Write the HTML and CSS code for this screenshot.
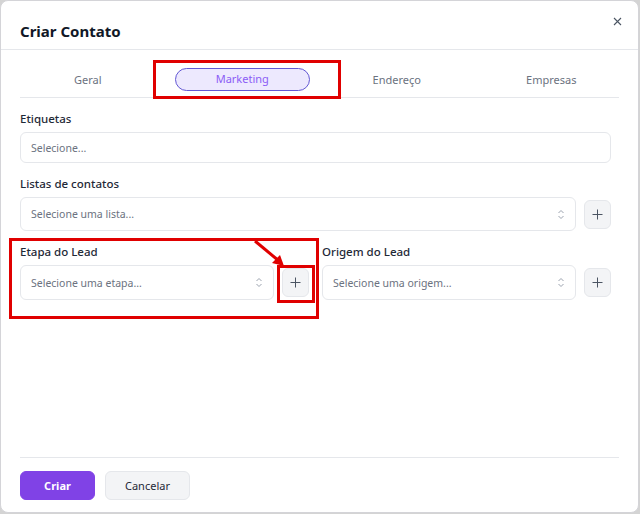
FILE: index.html
```html
<!DOCTYPE html>
<html lang="pt-br">
<head>
    <meta charset="UTF-8">
    <meta name="viewport" content="width=device-width, initial-scale=1.0">
    <title>Criar Contato</title>
    <link rel="stylesheet" href="styles.css">
</head>
<body>

    <div class="modal">
        <!-- Cabeçalho -->
        <header class="modal-header">
            <h2>Criar Contato</h2>
            <button class="close-btn" aria-label="Fechar">
                <svg width="9" height="9" viewBox="0 0 9 9"><path d="M1 1L8 8M8 1L1 8" stroke="#4b5563" stroke-width="1.1" fill="none"/></svg>
            </button>
        </header>

        <!-- Abas -->
        <nav class="tabs">
            <span class="tab">Geral</span>
            <span class="tab active">Marketing</span>
            <span class="tab">Endereço</span>
            <span class="tab">Empresas</span>
        </nav>

        <!-- Campos de marketing -->
        <main class="modal-body">
            <div class="field">
                <label>Etiquetas</label>
                <div class="input small">Selecione...</div>
            </div>

            <div class="field">
                <label>Listas de contatos</label>
                <div class="select-row">
                    <div class="input select">Selecione uma lista... <span class="chevrons"></span></div>
                    <button class="add-btn"></button>
                </div>
            </div>

            <div class="field-cols">
                <div class="field">
                    <label>Etapa do Lead</label>
                    <div class="select-row">
                        <div class="input select tall">Selecione uma etapa... <span class="chevrons"></span></div>
                        <button class="add-btn"></button>
                    </div>
                </div>
                <div class="field">
                    <label>Origem do Lead</label>
                    <div class="select-row">
                        <div class="input select tall">Selecione uma origem... <span class="chevrons"></span></div>
                        <button class="add-btn"></button>
                    </div>
                </div>
            </div>
        </main>

        <!-- Rodapé -->
        <footer class="modal-footer">
            <button class="btn primary">Criar</button>
            <button class="btn">Cancelar</button>
        </footer>

        <!-- Marcações em vermelho -->
        <div class="mark mark-tab"></div>
        <div class="mark mark-lead"></div>
        <div class="mark mark-add"></div>
        <svg class="mark-arrow" width="40" height="36" viewBox="0 0 40 36">
            <path d="M2 2L26 22" stroke="#e00000" stroke-width="3" fill="none"/>
            <path d="M31 27L19 24L27 16Z" fill="#e00000"/>
        </svg>
    </div>

    <script>
        // Ícones repetidos: setas do select e botão de adicionar
        const chevronSvg = '<svg width="8" height="11" viewBox="0 0 8 11"><path d="M1.5 4L4 1.5L6.5 4M1.5 7L4 9.5L6.5 7" stroke="#9ca3af" stroke-width="1" fill="none"/></svg>';
        const plusSvg = '<svg width="11" height="11" viewBox="0 0 11 11"><path d="M5.5 0.5V10.5M0.5 5.5H10.5" stroke="#4b5563" stroke-width="1" fill="none"/></svg>';

        document.querySelectorAll('.chevrons').forEach(el => el.innerHTML = chevronSvg);
        document.querySelectorAll('.add-btn').forEach(el => el.innerHTML = plusSvg);
    </script>

</body>
</html>
```

FILE: styles.css
```css
/* Fundo e janela */
body {
    margin: 0;
    background-color: #d4d4d4;
    font-family: "Noto Sans", Arial, sans-serif;
    color: #1f2937;
}

.modal {
    position: relative;
    width: 637px;
    height: 511px;
    background-color: #fff;
    border: 1px solid #d4d4d8;
    border-radius: 8px;
    display: flex;
    flex-direction: column;
}

/* Cabeçalho */
.modal-header {
    display: flex;
    justify-content: space-between;
    align-items: flex-start;
    padding: 21px 16px 8px 19px;
    border-bottom: 1px solid #e5e7eb;
}

.modal-header h2 {
    margin: 0;
    font-size: 15px;
    line-height: 19px;
    font-weight: 700;
    color: #111827;
}

.close-btn {
    background: none;
    border: none;
    padding: 0;
    margin-top: -8px;
    width: 9px;
    height: 12px;
    cursor: pointer;
}

/* Abas */
.tabs {
    display: grid;
    grid-template-columns: repeat(4, 1fr);
    gap: 19px;
    margin: 0 19px;
    padding: 18px 0 6px;
    border-bottom: 1px solid #e5e7eb;
}

.tab {
    height: 23px;
    line-height: 23px;
    text-align: center;
    font-size: 11px;
    color: #6b7280;
    box-sizing: border-box;
}

.tab.active {
    background-color: #ede9fe;
    border: 1.5px solid #6358d4;
    border-radius: 12px;
    line-height: 20px;
    color: #8b5cf6;
}

/* Corpo do formulário */
.modal-body {
    flex: 1;
    padding: 14px 27px 0 19px;
}

.field {
    margin-bottom: 14px;
}

.field label {
    display: block;
    font-size: 11.5px;
    line-height: 14px;
    font-weight: 500;
    margin-bottom: 6px;
}

.input {
    box-sizing: border-box;
    height: 34px;
    padding: 0 10px;
    border: 1px solid #e5e7eb;
    border-radius: 6px;
    font-size: 10.5px;
    color: #6b7280;
    display: flex;
    align-items: center;
}

.input.small {
    height: 31px;
}

.input.tall {
    height: 35px;
}

.select {
    flex: 1;
    justify-content: space-between;
}

.chevrons {
    display: flex;
}

.select-row {
    display: flex;
    align-items: center;
    gap: 8px;
}

.add-btn {
    width: 27px;
    height: 29px;
    padding: 0;
    background-color: #f3f4f6;
    border: 1px solid #e5e7eb;
    border-radius: 6px;
    display: flex;
    align-items: center;
    justify-content: center;
    cursor: pointer;
}

.field-cols {
    display: grid;
    grid-template-columns: 1fr 1fr;
    gap: 13px;
}

/* Rodapé */
.modal-footer {
    display: flex;
    gap: 10px;
    margin: 0 19px;
    padding: 13px 0 12px;
    border-top: 1px solid #e5e7eb;
}

.btn {
    height: 29px;
    padding: 0 19px;
    font-family: inherit;
    font-size: 11px;
    color: #1f2937;
    background-color: #f3f4f6;
    border: 1px solid #e5e7eb;
    border-radius: 6px;
    cursor: pointer;
}

.btn.primary {
    width: 75px;
    background-color: #8042e6;
    border-color: #8042e6;
    color: #fff;
    font-weight: 700;
}

/* Marcações em vermelho por cima da tela */
.mark {
    position: absolute;
    border: 3px solid #e00000;
}

.mark-tab {
    left: 152px;
    top: 59px;
    width: 182px;
    height: 33px;
}

.mark-lead {
    left: 8px;
    top: 237px;
    width: 304px;
    height: 75px;
}

.mark-add {
    left: 276px;
    top: 264px;
    width: 32px;
    height: 32px;
}

.mark-arrow {
    position: absolute;
    left: 252px;
    top: 238px;
}
```
